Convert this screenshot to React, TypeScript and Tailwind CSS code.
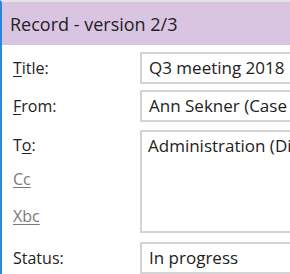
export default function App() {
  const font = { fontFamily: '"Open Sans", "Noto Sans", sans-serif' };

  return (
    <div
      className="w-[290px] h-[274px] overflow-hidden bg-white border-t-2 border-t-[#e3e3e3] border-l-2 border-l-[#2b88d8] text-[#222]"
      style={font}
    >
      <div className="h-[43px] bg-[#d9c5e2] pl-[8px] flex items-center text-[18px] leading-none">
        Record - version 2/3
      </div>

      <div className="mt-[7px] flex flex-col">
        <div className="flex items-center h-[32px]">
          <div className="w-[138px] shrink-0 pl-[11px] text-[16px]">
            <span className="underline underline-offset-2">T</span>itle:
          </div>
          <div className="w-[240px] shrink-0 h-[32px] border-2 border-[#d4d4d4] pl-[7px] flex items-center text-[17px] whitespace-nowrap">
            Q3 meeting 2018
          </div>
        </div>

        <div className="mt-[6px] flex items-center h-[32px]">
          <div className="w-[138px] shrink-0 pl-[11px] text-[16px]">
            <span className="underline underline-offset-2">F</span>rom:
          </div>
          <div className="w-[240px] shrink-0 h-[32px] border-2 border-[#d4d4d4] pl-[7px] flex items-center text-[17px] whitespace-nowrap">
            Ann Sekner (Case officer)
          </div>
        </div>

        <div className="mt-[8px] flex">
          <div className="w-[138px] shrink-0 pl-[11px] text-[16px] flex flex-col pt-[3px]">
            <span>
              T<span className="underline underline-offset-2">o</span>:
            </span>
            <span className="mt-[10px] text-[#7a7a7a] underline underline-offset-2">Cc</span>
            <span className="mt-[13px] text-[#7a7a7a] underline underline-offset-2">Xbc</span>
          </div>
          <div className="w-[240px] shrink-0 h-[103px] border-2 border-[#d4d4d4] pl-[6px] pt-[1px] text-[17px] whitespace-nowrap">
            Administration (Directorate)
          </div>
        </div>

        <div className="mt-[9px] flex items-center h-[32px]">
          <div className="w-[138px] shrink-0 pl-[11px] text-[16px]">Status:</div>
          <div className="w-[240px] shrink-0 h-[32px] border-2 border-[#d4d4d4] pl-[7px] flex items-center text-[17px] whitespace-nowrap">
            In progress
          </div>
        </div>
      </div>
    </div>
  );
}
